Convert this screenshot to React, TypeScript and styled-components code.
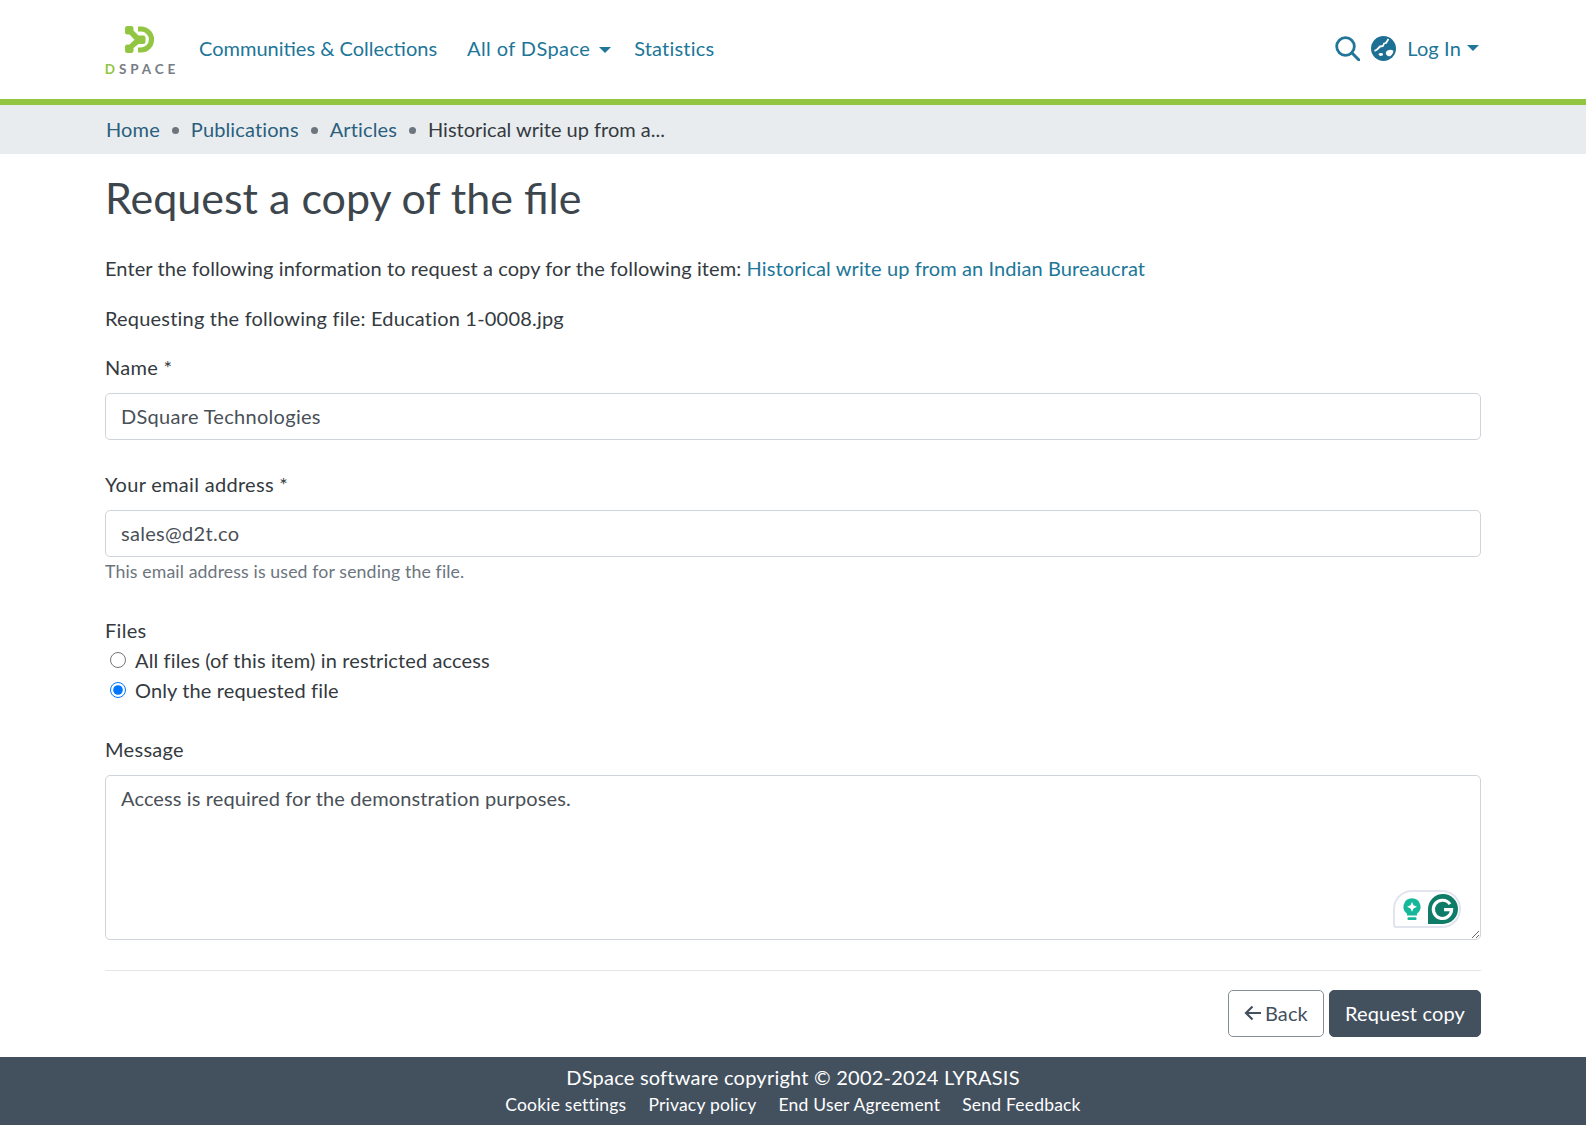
import React from "react";
import styled, { createGlobalStyle } from "styled-components";

const GlobalStyle = createGlobalStyle`
  html, body {
    margin: 0;
    padding: 0;
  }
  body {
    background: #fff;
    color: #343a40;
    font-family: "Lato", "Noto Sans", sans-serif;
    font-size: 20px;
    line-height: 30px;
    letter-spacing: 0.13px;
  }
  * {
    box-sizing: border-box;
  }
`;

const Page = styled.div`
  display: flex;
  flex-direction: column;
  min-height: 1125px;
`;

const Header = styled.header`
  display: flex;
  align-items: center;
  height: 105px;
  padding: 0 105px 3px;
  border-bottom: 6px solid #92c642;
`;

const LogoWrap = styled.a`
  display: flex;
  flex-direction: column;
  align-items: center;
  width: 70px;
  margin: 6px 24px 0 0;
`;

const LogoWord = styled.div`
  font-size: 13.5px;
  line-height: 16px;
  font-weight: 700;
  letter-spacing: 3.9px;
  margin-right: -4px;
  margin-top: 8px;
  color: #777c85;
  span {
    color: #92c642;
  }
`;

const NavLink = styled.a<{ $gap?: number; $spacing?: number }>`
  color: #207698;
  font-size: 20px;
  letter-spacing: ${(p) => p.$spacing ?? 0}px;
  margin-right: ${(p) => p.$gap ?? 30}px;
  white-space: nowrap;
`;

const Caret = styled.span<{ $left: number }>`
  display: inline-block;
  margin-left: ${(p) => p.$left}px;
  vertical-align: 3px;
  border-top: 6px solid #207698;
  border-left: 6px solid transparent;
  border-right: 6px solid transparent;
`;

const HeaderRight = styled.div`
  margin-left: auto;
  display: flex;
  align-items: center;
  color: #207698;
  margin-right: 2px;
`;

const IconSlot = styled.span`
  display: flex;
  margin-right: 11px;
`;

const Breadcrumb = styled.nav`
  display: flex;
  align-items: center;
  height: 49px;
  padding: 0 106px 2px;
  background: #e9ecef;
`;

const Crumb = styled.a`
  color: #2a5f7e;
`;

const CrumbActive = styled.span`
  color: #343a40;
  letter-spacing: 0;
`;

const Dot = styled.span`
  width: 7px;
  height: 7px;
  margin: 4px 12px 0;
  border-radius: 50%;
  background: #6c757d;
`;

const Main = styled.main`
  flex: 1;
  padding: 14px 105px 20px;
`;

const Title = styled.h1`
  margin: 0 0 25px;
  font-size: 43px;
  line-height: 60px;
  font-weight: 400;
  letter-spacing: 0;
  color: #3d464d;
`;

const Para = styled.p<{ $spacing?: number }>`
  margin: 0 0 20px;
  letter-spacing: ${(p) => p.$spacing ?? 0.1}px;
  a {
    color: #207698;
  }
`;

const Group = styled.div<{ $mb?: number }>`
  margin-bottom: ${(p) => p.$mb ?? 30}px;
`;

const Label = styled.label<{ $mb?: number }>`
  display: block;
  line-height: 28px;
  margin-bottom: ${(p) => p.$mb ?? 12}px;
  letter-spacing: 0.3px;
`;

const TextInput = styled.input`
  display: block;
  width: 100%;
  height: 47px;
  padding: 0 15px 2px;
  border: 1px solid #ced4da;
  border-radius: 5px;
  background: #fff;
  color: #495057;
  font: inherit;
  letter-spacing: 0.3px;
  outline: none;
`;

const Hint = styled.small`
  display: block;
  margin-top: 3px;
  font-size: 17.7px;
  line-height: 24px;
  color: #6c757d;
`;

const Radio = styled.label`
  display: flex;
  align-items: center;
  height: 30px;
  padding-left: 5px;
  input {
    width: 16px;
    height: 16px;
    margin: 0 9px 0 0;
  }
`;

const TextWrap = styled.div`
  position: relative;
  display: flex;
`;

const MessageArea = styled.textarea`
  display: block;
  width: 100%;
  height: 165px;
  padding: 7px 15px;
  border: 1px solid #ced4da;
  border-radius: 5px;
  color: #495057;
  font: inherit;
  letter-spacing: 0.12px;
  outline: none;
`;

const GrammarlyBadge = styled.div`
  position: absolute;
  right: 20px;
  bottom: 12px;
  display: flex;
  align-items: center;
  gap: 7px;
  width: 68px;
  height: 38px;
  padding: 0 1px 0 8px;
  background: #fff;
  border: 2px solid #e3e5ee;
  border-radius: 19px 19px 19px 3px;
`;

const BulbIcon = styled.svg`
  flex: none;
  margin-top: 2px;
`;

const Rule = styled.hr`
  margin: 30px 0 19px;
  border: 0;
  border-top: 1px solid #e7e7e7;
`;

const Actions = styled.div`
  display: flex;
  justify-content: flex-end;
  gap: 5px;
`;

const Button = styled.button<{ $primary?: boolean }>`
  display: flex;
  align-items: center;
  gap: 4px;
  height: 47px;
  padding: 0 15px 2px;
  border: 1px solid ${(p) => (p.$primary ? "#43515f" : "#868e96")};
  border-radius: 5px;
  background: ${(p) => (p.$primary ? "#43515f" : "#fff")};
  color: ${(p) => (p.$primary ? "#fff" : "#43515f")};
  font: inherit;
  letter-spacing: 0.15px;
`;

const Footer = styled.footer`
  height: 68px;
  padding-top: 5px;
  background: #43515f;
  color: #fff;
  text-align: center;
  letter-spacing: 0.23px;
`;

const FooterLinks = styled.div`
  display: flex;
  justify-content: center;
  gap: 22px;
  font-size: 17.5px;
  line-height: 26px;
  letter-spacing: 0.2px;
`;

const Logo = () => (
  <svg width="30" height="27" viewBox="0 0 30 27" fill="none" aria-label="DSpace logo">
    <path d="M13 3h3a10.500 10.500 0 0 1 0 21h-3" stroke="#92c642" strokeWidth="5.200" />
    <path
      d="M0 2.500A2.500 2.500 0 0 1 2.500 0H6a2.500 2.500 0 0 1 2.500 2.500v2l5 5h4.500a2.500 2.500 0 0 1 2.500 2.500v3.500a2.500 2.500 0 0 1-2.500 2.500h-4.500l-5 4v2.500A2.500 2.500 0 0 1 6 27H2.500A2.500 2.500 0 0 1 0 24.500V21a2.500 2.500 0 0 1 2.500-2.500h2l5-4.800-5-5.200h-2A2.500 2.500 0 0 1 0 6z"
      fill="#92c642"
    />
  </svg>
);

const SearchIcon = () => (
  <svg width="25" height="25" viewBox="0 0 25 25" fill="none" stroke="currentColor">
    <circle cx="10.500" cy="10.500" r="8.800" strokeWidth="2.800" />
    <path d="M16.800 16.800 24 24" strokeWidth="3" strokeLinecap="round" />
  </svg>
);

const GlobeIcon = () => (
  <svg width="25" height="25" viewBox="0 0 25 25">
    <circle cx="12.500" cy="12.500" r="12.500" fill="#1d6f94" />
    <path
      d="M17.500 3l-2.500 4-2 .500-1 2.500-3 .500-3 3-2.500 1.500"
      fill="none"
      stroke="#fff"
      strokeWidth="1.800"
      strokeLinejoin="round"
    />
    <path d="M15 16c1.500-2 5-3 7-1.500 1 1-.500 4-2.500 5.500-2 1-5.500-1-4.500-4z" fill="#fff" />
    <path d="M8 17.500c1-1 3.500-.500 4 .500.500 1-1 2-2.500 2-1.500-.500-2.500-1.500-1.500-2.500z" fill="#fff" />
  </svg>
);

const BackArrow = () => (
  <svg width="17" height="16" viewBox="0 0 17 16" fill="none" stroke="currentColor">
    <path d="M17 8H2M8.500 1.500 2 8l6.500 6.500" strokeWidth="2.200" />
  </svg>
);

const GrammarlyBulb = () => (
  <BulbIcon width="18" height="24" viewBox="0 0 20 26">
    <path
      d="M10 0a9.500 9.500 0 0 1 5.500 17.200V19H4.500v-1.800A9.500 9.500 0 0 1 10 0z"
      fill="#15b89a"
    />
    <path d="M10 4l1.700 3.800L15.500 9.500l-3.800 1.700L10 15l-1.700-3.800L4.500 9.500l3.800-1.700z" fill="#fff" />
    <rect x="5" y="21" width="10" height="3" rx="1" fill="#15b89a" />
  </BulbIcon>
);

const GrammarlyMark = () => (
  <svg width="30" height="30" viewBox="0 0 28 28">
    <path d="M14 0a14 14 0 1 1 0 28H0V14A14 14 0 0 1 14 0z" fill="#0f7c68" />
    <path
      d="M20.500 9.500a8.500 8.500 0 1 0 1.500 5h-7"
      fill="none"
      stroke="#fff"
      strokeWidth="3"
    />
  </svg>
);

export default function App() {
  return (
    <Page>
      <GlobalStyle />
      <Header>
        <LogoWrap>
          <Logo />
          <LogoWord>
            <span>D</span>SPACE
          </LogoWord>
        </LogoWrap>
        <NavLink>Communities &amp; Collections</NavLink>
        <NavLink $gap={23} $spacing={0.4}>
          All of DSpace
          <Caret $left={9} />
        </NavLink>
        <NavLink $spacing={0.2}>Statistics</NavLink>
        <HeaderRight>
          <IconSlot>
            <SearchIcon />
          </IconSlot>
          <IconSlot>
            <GlobeIcon />
          </IconSlot>
          Log In
          <Caret $left={6} />
        </HeaderRight>
      </Header>
      <Breadcrumb>
        <Crumb>Home</Crumb>
        <Dot />
        <Crumb>Publications</Crumb>
        <Dot />
        <Crumb>Articles</Crumb>
        <Dot />
        <CrumbActive>Historical write up from a...</CrumbActive>
      </Breadcrumb>
      <Main>
        <Title>Request a copy of the file</Title>
        <Para>
          Enter the following information to request a copy for the following item:{" "}
          <a>Historical write up from an Indian Bureaucrat</a>
        </Para>
        <Para $spacing={0.2}>Requesting the following file: Education 1-0008.jpg</Para>
        <Group>
          <Label>Name *</Label>
          <TextInput defaultValue="DSquare Technologies" />
        </Group>
        <Group $mb={32}>
          <Label>Your email address *</Label>
          <TextInput defaultValue="sales@d2t.co" />
          <Hint>This email address is used for sending the file.</Hint>
        </Group>
        <Group>
          <Label $mb={1}>Files</Label>
          <Radio>
            <input type="radio" name="files" />
            All files (of this item) in restricted access
          </Radio>
          <Radio>
            <input type="radio" name="files" defaultChecked />
            Only the requested file
          </Radio>
        </Group>
        <div>
          <Label>Message</Label>
          <TextWrap>
            <MessageArea defaultValue="Access is required for the demonstration purposes." />
            <GrammarlyBadge>
              <GrammarlyBulb />
              <GrammarlyMark />
            </GrammarlyBadge>
          </TextWrap>
        </div>
        <Rule />
        <Actions>
          <Button>
            <BackArrow />
            Back
          </Button>
          <Button $primary>Request copy</Button>
        </Actions>
      </Main>
      <Footer>
        <div>DSpace software copyright © 2002-2024 LYRASIS</div>
        <FooterLinks>
          <span>Cookie settings</span>
          <span>Privacy policy</span>
          <span>End User Agreement</span>
          <span>Send Feedback</span>
        </FooterLinks>
      </Footer>
    </Page>
  );
}
